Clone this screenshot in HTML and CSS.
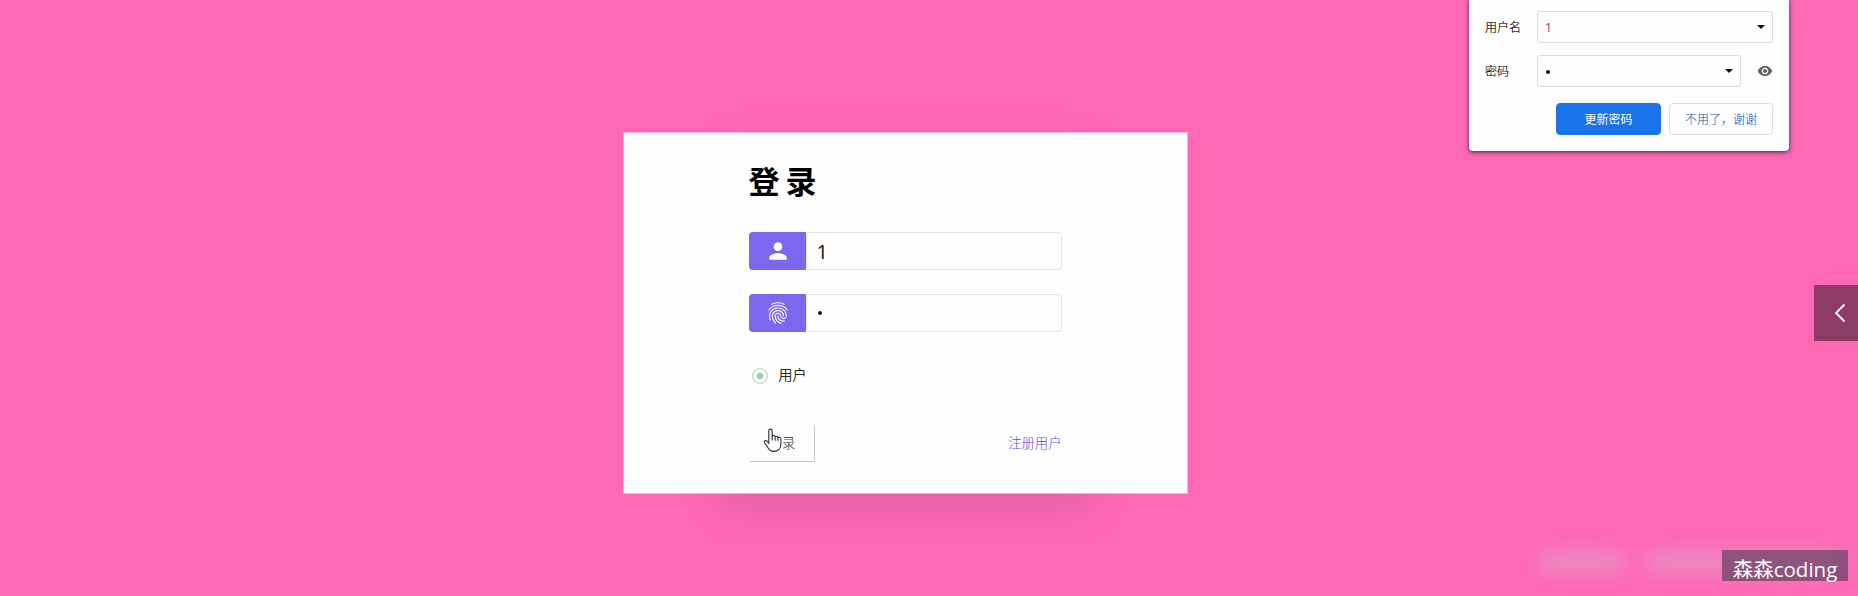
FILE: index.html
```html
<!DOCTYPE html>
<html lang="zh-CN">
<head>
<meta charset="utf-8">
<title>登录</title>
<link rel="stylesheet" href="styles.css">
</head>
<body>
<main class="page">
  <section class="card">
    <h1 class="title">登 录</h1>
    <div class="field">
      <span class="prefix"><svg viewBox="0 0 24 24"><path d="M12 4a4 4 0 1 1 0 8 4 4 0 0 1 0-8zM12 14c4.42 0 8 1.79 8 4v2H4v-2c0-2.21 3.58-4 8-4z"/></svg></span>
      <span class="control">1</span>
    </div>
    <div class="field">
      <span class="prefix"><svg viewBox="0 0 24 24"><path d="M17.81 4.47c-.08 0-.16-.02-.23-.06C15.66 3.42 14 3 12.01 3c-1.98 0-3.86.47-5.57 1.41-.24.13-.54.04-.68-.2-.13-.24-.04-.55.2-.68C7.82 2.52 9.86 2 12.01 2c2.13 0 3.99.47 6.03 1.52.25.13.34.43.21.67-.09.18-.26.28-.44.28zM3.5 9.72c-.1 0-.2-.03-.29-.09-.23-.16-.28-.47-.12-.7.99-1.4 2.25-2.5 3.75-3.27C9.98 4.04 14 4.03 17.15 5.65c1.5.77 2.76 1.86 3.75 3.25.16.22.11.54-.12.7-.23.16-.54.11-.7-.12-.9-1.26-2.04-2.25-3.39-2.94-2.87-1.47-6.54-1.47-9.4.01-1.36.7-2.5 1.7-3.4 2.96-.08.14-.23.21-.39.21zm6.25 12.07c-.13 0-.26-.05-.35-.15-.87-.87-1.34-1.43-2.01-2.64-.69-1.23-1.05-2.73-1.05-4.34 0-2.97 2.54-5.39 5.66-5.39s5.66 2.42 5.66 5.39c0 .28-.22.5-.5.5s-.5-.22-.5-.5c0-2.42-2.09-4.39-4.66-4.39-2.57 0-4.66 1.97-4.66 4.39 0 1.44.32 2.77.93 3.85.64 1.15 1.08 1.64 1.85 2.42.19.2.19.51 0 .71-.11.1-.24.15-.37.15zm7.17-1.85c-1.19 0-2.24-.3-3.1-.89-1.49-1.01-2.38-2.65-2.38-4.39 0-.28.22-.5.5-.5s.5.22.5.5c0 1.41.72 2.74 1.94 3.56.71.48 1.54.71 2.54.71.24 0 .64-.03 1.04-.1.27-.05.53.13.58.41.05.27-.13.53-.41.58-.57.11-1.07.12-1.21.12zM14.91 22c-.04 0-.09-.01-.13-.02-1.59-.44-2.63-1.03-3.72-2.1-1.4-1.39-2.17-3.24-2.17-5.22 0-1.62 1.38-2.94 3.08-2.94 1.7 0 3.08 1.32 3.08 2.94 0 1.07.93 1.94 2.08 1.94s2.08-.87 2.08-1.94c0-3.77-3.25-6.83-7.25-6.83-2.84 0-5.44 1.58-6.61 4.03-.39.81-.59 1.76-.59 2.8 0 .78.07 2.01.67 3.61.1.26-.03.55-.29.64-.26.1-.55-.04-.64-.29-.49-1.31-.73-2.61-.73-3.96 0-1.2.23-2.29.68-3.24 1.33-2.79 4.28-4.6 7.51-4.6 4.55 0 8.25 3.51 8.25 7.83 0 1.62-1.38 2.94-3.08 2.94s-3.08-1.32-3.08-2.94c0-1.07-.93-1.94-2.08-1.94s-2.08.87-2.08 1.94c0 1.71.66 3.31 1.87 4.51.95.94 1.86 1.46 3.27 1.85.27.07.42.35.35.61-.05.23-.26.38-.47.38z"/></svg></span>
      <span class="control"><i class="dot"></i></span>
    </div>
    <div class="role"><span class="radio"></span><span class="role-name">用户</span></div>
    <div class="actions">
      <div class="login"><span class="covered">登</span><span>录</span>
        <svg class="cursor" viewBox="0 0 19 25"><path d="M5.8 15.2V2.8a1.7 1.7 0 0 1 3.4 0v5.4c1-1.3 2.6-.8 2.9.5 1-.9 2.4-.4 2.7.8 1.2-.8 3.1.1 3.1 1.7v4.6c0 4.5-2.7 7.6-6.8 7.6-3.6 0-5.4-1.8-6.9-4.9L1.5 14.6c-.8-1.6 1.1-2.9 2.5-1.5zM9.2 8v4.5M12.1 8.7v4M14.9 9.5v3.5"/></svg>
      </div>
      <a class="register">注册用户</a>
    </div>
  </section>
</main>

<aside class="popup">
  <div class="row"><span class="label">用户名</span><span class="select">1<i class="caret"></i></span></div>
  <div class="row"><span class="label">密码</span><span class="select"><i class="dot small"></i><i class="caret"></i></span>
    <svg class="eye" viewBox="0 0 24 24"><path d="M12 4.5C7 4.5 2.73 7.61 1 12c1.73 4.39 6 7.5 11 7.5s9.27-3.11 11-7.5c-1.73-4.39-6-7.5-11-7.5zM12 17c-2.76 0-5-2.24-5-5s2.24-5 5-5 5 2.24 5 5-2.24 5-5 5zm0-8c-1.66 0-3 1.34-3 3s1.34 3 3 3 3-1.34 3-3-1.34-3-3-3z"/></svg></div>
  <div class="buttons"><span class="btn primary">更新密码</span><span class="btn">不用了，谢谢</span></div>
</aside>

<div class="drawer"><svg viewBox="0 0 12 20"><path d="M10.5 1.5 2 10l8.5 8.5"/></svg></div>
<div class="smudge"><i class="s1"></i><i class="s2"></i></div>
<div class="mark">森森coding</div>
</body>
</html>
```
FILE: styles.css
```css
* { box-sizing: border-box; }
body {
  margin: 0;
  height: 596px;
  overflow: hidden;
  background: #ff69b4;
  color: #111;
  font-family: "Open Sans", "Noto Sans CJK SC", sans-serif;
}
.page { position: relative; z-index: 0; display: flex; justify-content: center; padding: 132px 48px 0 0; }
.card {
  position: relative;
  width: 565px;
  height: 362px;
  padding: 30px 125px 0;
  background: #fefefe;
  background-clip: padding-box;
  border: 1px solid rgba(254, 254, 254, .5);
}
.card::before {
  content: "";
  position: absolute;
  z-index: -1;
  inset: 10px 92px -19px;
  border-radius: 20px;
  background: rgba(75, 55, 80, .14);
  filter: blur(17px);
}
.title { margin: 0 0 33px; height: 36px; line-height: 34px; font-size: 31px; font-weight: 700; word-spacing: -1px; color: #000; font-family: "Noto Sans CJK SC", sans-serif; }
.field { display: flex; height: 38px; margin-bottom: 24px; }
.prefix { width: 57px; padding-left: 1px; display: flex; align-items: center; justify-content: center; background: #7b68ee; border-radius: 4px 0 0 4px; }
.prefix svg { width: 26px; height: 26px; fill: #fff; }
.control { flex: 1; display: flex; align-items: center; padding-left: 10px; border: 1px solid #e0e0e2; border-radius: 4px; font-size: 20px; color: #111; }
.dot { width: 4px; height: 4px; margin-left: 1px; border-radius: 50%; background: #111; }
.small { margin: 1px 0 0; }
.role { display: flex; align-items: center; gap: 11px; height: 20px; margin-top: 33px; padding-left: 3px; font-size: 14px; font-weight: 300; color: #000; }
.radio { width: 16px; height: 16px; margin-top: 1px; border: 1px solid #a3d6b5; border-radius: 50%; background: radial-gradient(circle, #98cfac 0 3px, transparent 3.6px); }
.role-name { margin-top: -3px; -webkit-text-stroke: .2px #000; }
.actions { display: flex; justify-content: space-between; align-items: center; height: 37px; margin-top: 40px; }
.login { position: relative; display: flex; align-items: center; justify-content: center; width: 66px; height: 37px; padding-left: 2px; border-right: 1px solid #c4c4c6; border-bottom: 1px solid #c4c4c6; border-radius: 2px; font-size: 13.33px; font-weight: 300; color: #333; }
.login span { margin-top: -2px; }
.login .covered { color: transparent; }
.cursor { position: absolute; left: 14px; top: 3px; width: 19px; height: 25px; fill: #fff; stroke: #2a2a38; stroke-width: 1.1; }
.register { margin-top: -2px; font-size: 13.33px; font-weight: 300; color: #5d49cc; }
.popup {
  position: absolute;
  left: 1469px;
  top: 0;
  width: 320px;
  height: 151px;
  padding: 11px 16px 0;
  background: #fefefe;
  border-radius: 0 0 4px 4px;
  box-shadow: 0 1px 4px rgba(20, 20, 40, .85);
  font-size: 12px;
}
.row { display: flex; align-items: center; height: 32px; margin-bottom: 12px; }
.label { width: 52px; color: #000; font-weight: 300; -webkit-text-stroke: .15px #000; }
.select { flex: 1; height: 32px; padding: 0 8px 0 7px; display: flex; align-items: center; justify-content: space-between; border: 1px solid #d9dbe0; border-radius: 3px; color: #555; }
.select .small { margin-left: 1px; }
.caret { border: 4px solid transparent; border-top-color: #111; border-bottom: 0; margin-right: -1px; }
.eye { width: 16px; height: 16px; margin-left: 16px; fill: #5f6368; }
.buttons { display: flex; justify-content: flex-end; gap: 8px; margin-top: 16px; }
.btn { width: 104px; height: 32px; line-height: 31px; text-align: center; border: 1px solid #dadce0; border-radius: 4px; color: #0d4bb0; font-weight: 300; }
.primary { width: 105px; background: #1a73e8; border-color: #1a73e8; color: #fff; font-weight: 400; }
.drawer { position: absolute; right: 0; top: 285px; width: 44px; height: 56px; background: rgba(51, 24, 43, .56); }
.drawer svg { position: absolute; left: 20px; top: 18px; width: 12px; height: 20px; fill: none; stroke: #fff; stroke-width: 1.8; }
.smudge i { position: absolute; border-radius: 18px; background: #dca2c8; filter: blur(9px); opacity: .55; }
.smudge .s1 { left: 1537px; top: 550px; width: 90px; height: 24px; }
.smudge .s2 { left: 1644px; top: 550px; width: 202px; height: 24px; }
.mark { position: absolute; left: 1722px; top: 550px; width: 126px; height: 31px; line-height: 39px; text-align: center; background: rgba(65, 50, 75, .56); color: #fff; font-size: 20.5px; }
```
